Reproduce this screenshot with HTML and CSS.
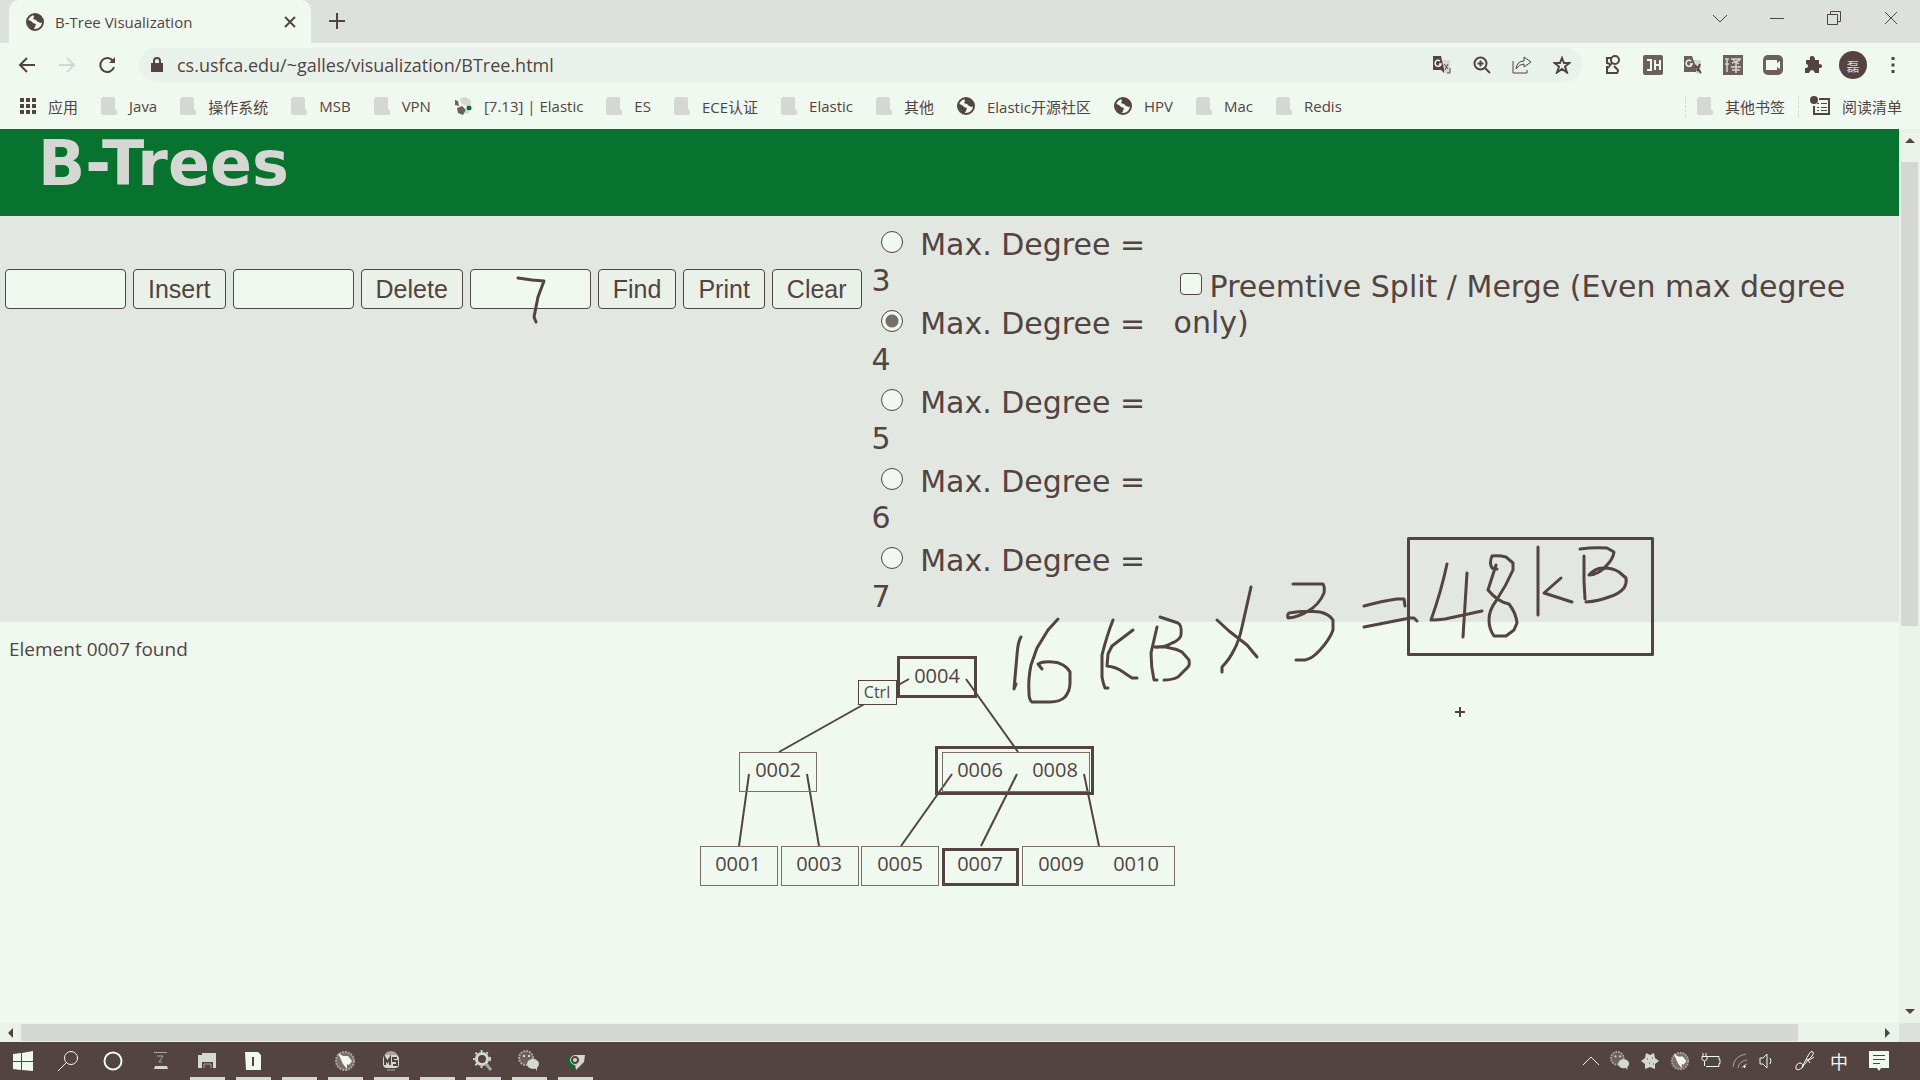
FILE: index.html
```html
<!DOCTYPE html>
<html lang="zh-CN">
<head>
<meta charset="utf-8">
<title>B-Tree Visualization</title>
<link rel="stylesheet" href="styles.css">
</head>
<body>
<svg class="defs" width="0" height="0" aria-hidden="true">
  <symbol id="globe" viewBox="0 0 18 18">
    <circle cx="9" cy="9" r="8" fill="#eff9f0" stroke="#534341" stroke-width="2"/>
    <path d="M2 7l3 1 2 2 3 1-1 3-2 3-3-2-2-4zM7 1l1 3-1 2 3 1 2 2 3 1 2-2-2-4-3-3z" fill="#534341"/>
  </symbol>
  <symbol id="folder" viewBox="0 0 16 18">
    <path d="M2 0h11l1 2v10l2 2v3l-1 1H2l-2-1V2z" fill="#d4d7d2"/>
  </symbol>
  <symbol id="bird" viewBox="0 0 22 22">
    <circle cx="11" cy="11" r="9" fill="#7c6f6b" stroke="#a9a59f" stroke-width="2" stroke-dasharray="2 1"/>
    <path d="M4 3l5 3 5 0 4 5-3 4-2-1 0 5-4-5z" fill="#eff9f0"/>
  </symbol>
  <symbol id="chat" viewBox="0 0 22 22">
    <circle cx="8" cy="8" r="7" fill="#6d605b" stroke="#a9a59f" stroke-width="2" stroke-dasharray="2 1"/>
    <path d="M5 6h2M10 6h2" stroke="#d4d7d2" stroke-width="2"/>
    <ellipse cx="15" cy="14" rx="6" ry="5" fill="#d4d7d2"/>
    <path d="M17 18l2 3v-4z" fill="#d4d7d2"/>
  </symbol>
</svg>

<header class="browser">
  <div class="tabstrip">
    <div class="tab">
      <svg class="globe" aria-hidden="true"><use href="#globe"/></svg>
      <span class="tab-title">B-Tree Visualization</span>
      <button class="icon-btn" aria-label="Close tab"><svg width="12" height="12" viewBox="0 0 12 12"><path d="M1 1l10 10M11 1L1 11" class="line2"/></svg></button>
    </div>
    <button class="icon-btn new-tab" aria-label="New tab"><svg width="16" height="16" viewBox="0 0 16 16"><path d="M8 0v16M0 8h16" class="line2"/></svg></button>
    <div class="window-buttons">
      <button class="icon-btn" aria-label="Search tabs"><svg width="14" height="14" viewBox="0 0 14 14"><path d="M0 4l7 7 7-7" class="line1"/></svg></button>
      <button class="icon-btn" aria-label="Minimize"><svg width="14" height="14" viewBox="0 0 14 14"><path d="M0 7.500h14" class="line1"/></svg></button>
      <button class="icon-btn" aria-label="Restore"><svg width="14" height="14" viewBox="0 0 14 14"><path d="M.5 3.500h10v10H.5zM3.500 3V.5h10v10H11" class="line1"/></svg></button>
      <button class="icon-btn" aria-label="Close"><svg width="14" height="14" viewBox="0 0 14 14"><path d="M1 1l12 12M13 1L1 13" class="line1"/></svg></button>
    </div>
  </div>

  <div class="toolbar">
    <button class="icon-btn nav" aria-label="Back"><svg width="18" height="18" viewBox="0 0 18 18"><path d="M17 9H2M9 2L2 9l7 7" class="line2"/></svg></button>
    <button class="icon-btn nav" aria-label="Forward"><svg width="18" height="18" viewBox="0 0 18 18"><path d="M1 9h15M9 2l7 7-7 7" class="line2 pale"/></svg></button>
    <button class="icon-btn nav" aria-label="Reload"><svg width="18" height="18" viewBox="0 0 18 18"><path d="M15 5a7 7 0 1 0 1 6" class="line2"/><path d="M17 1v6h-6z" fill="#534341"/></svg></button>
    <div class="omnibox">
      <svg width="12" height="16" viewBox="0 0 12 16" aria-hidden="true"><path d="M0 6h12v9H0z" fill="#534341"/><path d="M3 7V4a3 3 0 0 1 6 0v3" class="line2"/></svg>
      <input class="url" aria-label="Address" value="cs.usfca.edu/~galles/visualization/BTree.html">
      <button class="icon-btn tool" aria-label="Translate"><svg width="20" height="20" viewBox="0 0 20 20"><path d="M10 5h8v13h-6z" fill="#d4d7d2"/><path d="M1 1h8l3 13 0 4-3-3H1z" fill="#534341"/><path d="M8 6a3 3 0 1 0 1 3H7" fill="none" stroke="#eff9f0" stroke-width="1.500"/><path d="M12 9l4 5M16 9l-3 6M18 13v5h-3" class="line1"/></svg></button>
      <button class="icon-btn tool" aria-label="Zoom"><svg width="18" height="18" viewBox="0 0 18 18"><circle cx="7.500" cy="7.500" r="6" class="line2"/><path d="M12 12l5 5M7.500 4.500v6M4.500 7.500h6" class="line2"/></svg></button>
      <button class="icon-btn tool" aria-label="Share"><svg width="20" height="20" viewBox="0 0 20 20"><path d="M1 6v12h14v-3M4 14q1-8 8-8V2l7 5-7 5V9q-5 0-8 5z" class="line1"/></svg></button>
      <button class="icon-btn tool" aria-label="Bookmark"><svg width="18" height="18" viewBox="0 0 18 18"><path d="M9 2l2 5h5.500l-4.500 3.500 2 6L9 13l-5 3.500 2-6L1.500 7H7z" class="line2"/></svg></button>
    </div>
    <div class="extensions">
      <button class="icon-btn tool" aria-label="Extension"><svg width="18" height="20" viewBox="0 0 18 20"><circle cx="11" cy="5" r="4" class="line2"/><path d="M7 3H3v5l3 1M8 8l-4 5M3 11v7h10q2-2 0-4l-3-3" class="line2"/></svg></button>
      <button class="icon-btn tool" aria-label="JSON"><svg width="20" height="20" viewBox="0 0 20 20"><rect width="20" height="20" rx="2" fill="#6d605b"/><path d="M4 5h4v10H4M12 5v10M17 5v10M12 10h5" fill="none" stroke="#eff9f0" stroke-width="2"/></svg></button>
      <button class="icon-btn tool" aria-label="Translate extension"><svg width="20" height="20" viewBox="0 0 20 20"><path d="M10 5h8v14h-5z" fill="#d4d7d2"/><path d="M1 1h8l4 11 0 5H1z" fill="#6d605b"/><path d="M8 6a3 3 0 1 0 1 3H7" fill="none" stroke="#eff9f0" stroke-width="1.500"/><path d="M12 10l6 8M17 9l-3 7" class="line2"/></svg></button>
      <button class="icon-btn tool" aria-label="Scan"><svg width="20" height="20" viewBox="0 0 20 20"><rect width="20" height="20" fill="#6d605b"/><path d="M2 4h4M4 4v13M2 9h4M8 4h10M9 8l8-3M10 5l6 4M8 12h10M13 8v10M9 15h8" fill="none" stroke="#d4d7d2" stroke-width="1.500"/></svg></button>
      <button class="icon-btn tool" aria-label="Recorder"><svg width="20" height="20" viewBox="0 0 20 20"><rect width="20" height="20" rx="5" fill="#6d605b"/><path d="M3 5h11v3l3-2v8l-3-2v3H3z" fill="#eff9f0"/></svg></button>
      <button class="icon-btn tool" aria-label="Extensions"><svg width="20" height="20" viewBox="0 0 20 20"><path d="M3 5h4q-1-4 2-4t3 4h4v4q3 0 3 2t-3 2v5h-4q-1-3-3-3t-3 3H2v-5q3 0 3-2T3 9z" fill="#534341"/></svg></button>
      <button class="icon-btn tool avatar" aria-label="Profile">磊</button>
      <button class="icon-btn tool" aria-label="Menu"><svg width="4" height="16" viewBox="0 0 4 16"><path d="M.5 0h3v3h-3zM.5 6.500h3v3h-3zM.5 13h3v3h-3z" fill="#534341"/></svg></button>
    </div>
  </div>

  <nav class="bookmarks">
    <a href="#" class="bookmark"><svg width="16" height="16" viewBox="0 0 16 16"><path d="M0 2h16M0 8h16M0 14h16" fill="none" stroke="#534341" stroke-width="4" stroke-dasharray="4 2"/></svg>应用</a>
    <a href="#" class="bookmark"><svg class="folder"><use href="#folder"/></svg>Java</a>
    <a href="#" class="bookmark"><svg class="folder"><use href="#folder"/></svg>操作系统</a>
    <a href="#" class="bookmark"><svg class="folder"><use href="#folder"/></svg>MSB</a>
    <a href="#" class="bookmark"><svg class="folder"><use href="#folder"/></svg>VPN</a>
    <a href="#" class="bookmark"><svg width="18" height="18" viewBox="0 0 18 18"><path d="M6 1l6-1 5 4v4l-5 1-5-3z" fill="#d4d7d2"/><path d="M1 3l3 1 1 5-4-1zM3 11l5-2 4 4-3 5-5-2z" fill="#6d605b"/><circle cx="15" cy="11" r="2.500" fill="#08722f"/><circle cx="13" cy="15" r="2" fill="#d4d7d2"/></svg>[7.13] | Elastic</a>
    <a href="#" class="bookmark"><svg class="folder"><use href="#folder"/></svg>ES</a>
    <a href="#" class="bookmark"><svg class="folder"><use href="#folder"/></svg>ECE认证</a>
    <a href="#" class="bookmark"><svg class="folder"><use href="#folder"/></svg>Elastic</a>
    <a href="#" class="bookmark"><svg class="folder"><use href="#folder"/></svg>其他</a>
    <a href="#" class="bookmark"><svg class="globe"><use href="#globe"/></svg>Elastic开源社区</a>
    <a href="#" class="bookmark"><svg class="globe"><use href="#globe"/></svg>HPV</a>
    <a href="#" class="bookmark"><svg class="folder"><use href="#folder"/></svg>Mac</a>
    <a href="#" class="bookmark"><svg class="folder"><use href="#folder"/></svg>Redis</a>
    <div class="bookmarks-end">
      <a href="#" class="bookmark"><svg class="folder"><use href="#folder"/></svg>其他书签</a>
      <a href="#" class="bookmark"><svg width="20" height="20" viewBox="0 0 20 20"><circle cx="4" cy="4" r="4" fill="#534341"/><path d="M9 3h10v15H4v-8" class="line2"/><path d="M7 7.500h2M11 7.500h6M7 11.500h2M11 11.500h6M7 14.500h2M11 14.500h6" class="line1"/></svg>阅读清单</a>
    </div>
  </nav>
</header>

<div class="viewport">
  <main class="page">
    <div class="banner"><h1>B-Trees</h1></div>
    <form class="controls">
      <div class="actions">
        <input class="field" aria-label="Value to insert">
        <button type="button" class="action">Insert</button>
        <input class="field" aria-label="Value to delete">
        <button type="button" class="action">Delete</button>
        <input class="field" aria-label="Value to find">
        <button type="button" class="action">Find</button>
        <button type="button" class="action">Print</button>
        <button type="button" class="action">Clear</button>
      </div>
      <div class="degrees">
        <label><input type="radio" name="degree"> Max. Degree = 3</label>
        <label><input type="radio" name="degree" checked> Max. Degree = 4</label>
        <label><input type="radio" name="degree"> Max. Degree = 5</label>
        <label><input type="radio" name="degree"> Max. Degree = 6</label>
        <label><input type="radio" name="degree"> Max. Degree = 7</label>
      </div>
      <label class="preempt"><input type="checkbox">Preemtive Split / Merge (Even max degree only)</label>
    </form>
    <div class="canvas">
      <svg class="tree" width="1200" height="280" viewBox="0 622 1200 280">
        <text x="9" y="656" class="message">Element 0007 found</text>
        <g class="edges">
          <path d="M909 679L779 752M966 679l52 73M749 774l-10 72M807 774l12 72M952 774l-51 72M1017 774l-36 72M1084 774l15 72"/>
        </g>
        <g class="nodes">
          <rect x="739.500" y="752.500" width="77" height="39"/>
          <rect x="942.500" y="752.500" width="147" height="39"/>
          <rect x="700.500" y="846.500" width="77" height="39"/>
          <rect x="781.500" y="846.500" width="77" height="39"/>
          <rect x="861.500" y="846.500" width="77" height="39"/>
          <rect x="1022.500" y="846.500" width="152" height="39"/>
        </g>
        <g class="marked">
          <rect x="898.500" y="657.500" width="77" height="39"/>
          <rect x="936.500" y="747.500" width="156" height="46"/>
          <rect x="943.500" y="849.500" width="74" height="35"/>
        </g>
        <g class="keys">
          <text x="937" y="683">0004</text>
          <text x="778" y="777">0002</text>
          <text x="980" y="777">0006</text>
          <text x="1055" y="777">0008</text>
          <text x="738" y="871">0001</text>
          <text x="819" y="871">0003</text>
          <text x="900" y="871">0005</text>
          <text x="980" y="871">0007</text>
          <text x="1061" y="871">0009</text>
          <text x="1136" y="871">0010</text>
        </g>
        <rect x="858.500" y="680.500" width="38" height="24" class="hint"/>
        <text x="877" y="698" class="hint-text">Ctrl</text>
      </svg>
    </div>
  </main>
  <div class="vscroll">
    <svg width="10" height="5" viewBox="0 0 10 5"><path d="M5 0l5 5H0z"/></svg>
    <div class="vthumb"></div>
    <svg width="10" height="5" viewBox="0 0 10 5"><path d="M0 0h10L5 5z"/></svg>
  </div>
  <div class="hscroll">
    <svg width="5" height="10" viewBox="0 0 5 10"><path d="M5 0v10L0 5z"/></svg>
    <div class="hthumb"></div>
    <svg width="5" height="10" viewBox="0 0 5 10"><path d="M0 0l5 5-5 5z"/></svg>
  </div>
  <div class="corner"></div>
</div>

<footer class="taskbar">
  <div class="system">
    <button class="task" aria-label="Start"><svg width="20" height="20" viewBox="0 0 20 20"><path d="M0 3l8-1v8H0zM9 2l11-2v10H9zM0 11h8v8l-8-1zM9 11h11v9L9 19z" fill="#eff9f0"/></svg></button>
    <button class="task" aria-label="Search"><svg width="20" height="20" viewBox="0 0 20 20"><circle cx="13" cy="7" r="6.500" class="light"/><path d="M8.500 11.500L0 20" class="light"/></svg></button>
    <button class="task" aria-label="Cortana"><svg width="20" height="20" viewBox="0 0 20 20"><circle cx="10" cy="10" r="8.500" class="light ring"/></svg></button>
  </div>
  <div class="apps">
    <button class="task" aria-label="Terminal"><svg width="16" height="20" viewBox="0 0 16 20"><path d="M1 1.500h13M4 5h6l-4 6h3" class="light faint"/><path d="M2 15h12l1 3H1z" fill="#d4d7d2"/></svg></button>
    <button class="task open" aria-label="Explorer"><svg width="18" height="16" viewBox="0 0 18 16"><path d="M0 2h4V0h14v15h-3V9H4v6H0z" fill="#d4d7d2"/><path d="M6 15v-4h7v4" class="light faint"/></svg></button>
    <button class="task open" aria-label="Typora"><svg width="18" height="20" viewBox="0 0 18 20"><path d="M1 1h13l3 3v15H2z" fill="#eff9f0"/><path d="M9 6v9" class="line2"/></svg></button>
    <button class="task open" aria-label="App"></button>
    <button class="task open" aria-label="Bird"><svg width="22" height="22"><use href="#bird"/></svg></button>
    <button class="task open" aria-label="Monitor"><svg width="20" height="22" viewBox="0 0 20 22"><ellipse cx="10" cy="7" rx="7" ry="6" fill="#a9a59f"/><rect x="2" y="5" width="16" height="13" rx="4" fill="#d4d7d2"/><path d="M4 15V8l2.500 4L9 8v7M16 8h-4v3h4v4h-4" class="line2"/><path d="M6 20h8" class="light faint"/></svg></button>
    <button class="task open" aria-label="App"></button>
    <button class="task open" aria-label="Inspect"><svg width="20" height="22" viewBox="0 0 20 22"><circle cx="9" cy="9" r="5.500" fill="none" stroke="#d4d7d2" stroke-width="3"/><circle cx="9" cy="9" r="8" fill="none" stroke="#d4d7d2" stroke-width="2" stroke-dasharray="2 4"/><path d="M13 14l5 6" stroke="#a9a59f" stroke-width="3"/></svg></button>
    <button class="task open" aria-label="Chat"><svg width="22" height="22"><use href="#chat"/></svg></button>
    <button class="task open" aria-label="Chrome"><svg width="20" height="20" viewBox="0 0 20 20"><path d="M1 4l3 11 6 4-1-7z" fill="#08722f"/><path d="M10 4h10l-1 7-8 8-1-6z" fill="#d4d7d2"/><circle cx="10" cy="9" r="4.500" fill="#534341" stroke="#d4d7d2"/><circle cx="10" cy="9" r="2" fill="#d4d7d2"/></svg></button>
  </div>
  <div class="tray">
    <svg width="16" height="10" viewBox="0 0 16 10"><path d="M0 9l8-8 8 8" class="light"/></svg>
    <svg width="20" height="20"><use href="#chat"/></svg>
    <svg width="18" height="18" viewBox="0 0 18 18"><path d="M5 1l4 2 4-2 1 5 4 3-4 3 0 5-5-2-5 2V12L0 9l4-3z" fill="#d4d7d2"/><path d="M6 7h1M11 6h1M8 11h1M12 12h1" class="line1"/></svg>
    <svg width="20" height="20"><use href="#bird"/></svg>
    <svg width="20" height="16" viewBox="0 0 20 16"><path d="M6 3.500h12v3h1v4h-1v3H5M2 0v3M5 0v3M1 3.500h5v3L3.500 8 1 6.500zM3.500 8v5" class="light"/></svg>
    <svg width="16" height="16" viewBox="0 0 16 16"><path d="M1 14Q2 3 14 1M6 15q1-7 9-8M10 15q1-3 5-4" class="light faint"/><path d="M11 13.500h3M12.500 12v3" class="light"/></svg>
    <svg width="16" height="16" viewBox="0 0 16 16"><path d="M1 5h3l4-4v14l-4-4H1zM11 5q2 3 0 6" class="light"/></svg>
    <svg class="pen" width="20" height="20" viewBox="0 0 20 20"><path d="M1 15q2-4 5-3 4 3 1 5-4 3-6 1zM7 16L14 3q2-4 4-2 1 2-1 4L7 16M11 9q5 0 8-3M13 9l2 3" class="light"/></svg>
    <span class="ime">中</span>
    <svg width="20" height="20" viewBox="0 0 20 20"><path d="M0 0h20v17h-8l-2 3-2-3H0z" fill="#eff9f0"/><path d="M4 4.500h12M4 8.500h12M4 12.500h7" class="line1"/></svg>
  </div>
</footer>

<svg class="ink" width="1700" height="760" viewBox="0 0 1700 760" aria-hidden="true">
  <path d="M518 278l14 2 12 1-6 16-4 20 2 5"/>
  <path d="M1021 637q-3 4-4 18l-3 34 2-5"/>
  <path d="M1058 619l-10 11-11 18-6 17q-3 14-2 28 0 7 3 9h18q10 0 15-5 5-6 5-14v-11q-2-4-7-7-5-3-10-3-10-1-15 2l4 5"/>
  <path d="M1113 620q-6 15-11 35v22q1 6 3 11h3"/>
  <path d="M1133 630l-21 16-4 8-1 12q8 1 13 4l12 8h5"/>
  <path d="M1157 627l-6 26q0 14 3 27h3"/>
  <path d="M1160 617l18 6q4 2 3 12-1 5-9 8-9 5-17 4 9-1 15 1 7 1 12 4l7 8q1 5-1 7l-10 10q-6 3-14 3"/>
  <path d="M1251 587l-9 40q-3 14-8 23-5 10-12 17v5M1217 620l12 11 18 14 10 12"/>
  <path d="M1293 584h30q2 3 1 9-5 12-16 18-9 6-20 7-1-4 1-5 16-3 31-1 9 2 13 8v10q-3 9-13 20-8 9-15 10h-9"/>
  <path d="M1364 606q18-5 33-7h7l1 7M1364 627l46-9h4l3 3"/>
  <path d="M1408.500 538.500h244v116h-244z"/>
  <path d="M1447 564q-6 28-16 56 7 0 14-1l37-8M1467 573q-2 34-4 64"/>
  <path d="M1496 565l-8 25q10 12 21 14 7 9 8 19l-3 7-8 6h-12q-5-7-5-16 0-10 7-19 10-15 17-31v-7l-7-6q-7-2-14-1-3 7 0 12l5 1"/>
  <path d="M1538 547v68M1561 578l-17 15 28 9"/>
  <path d="M1584 556v25l1 18M1580 549q14-2 27-1l7 4q-1 7-7 13-7 9-18 10 7-8 15-7 9 0 15 4l7 6q1 5-2 10-5 6-15 9-10 4-23 5"/>
  <path d="M1455 712h10M1460 707v10" class="cursor"/>
</svg>
</body>
</html>
```
FILE: styles.css
```css
:root {
  --paper: #eff9f0;
  --grey: #d4d7d2;
  --mid: #e2e8e1;
  --ink: #534341;
  --green: #08722f;
}

* { box-sizing: border-box; }

body {
  margin: 0;
  height: 100vh;
  display: flex;
  flex-direction: column;
  overflow: hidden;
  position: relative;
  background: var(--paper);
  color: var(--ink);
  font-family: "Open Sans", "Noto Sans CJK SC", sans-serif;
  font-size: 15px;
}

.defs { position: absolute; }

.line1 { fill: none; stroke: var(--ink); stroke-width: 1; }
.line2 { fill: none; stroke: var(--ink); stroke-width: 2; }
.pale { stroke: var(--grey); }
.light { fill: none; stroke: var(--paper); stroke-width: 1; }
.light.ring { stroke-width: 2; }
.light.faint { stroke: #a9a59f; }

.icon-btn {
  display: flex;
  align-items: center;
  justify-content: center;
  padding: 0;
  border: 0;
  background: none;
  color: inherit;
}

.globe { width: 18px; height: 18px; flex: none; }
.folder { width: 16px; height: 18px; flex: none; }

/* Tab strip */
.tabstrip {
  height: 43px;
  display: flex;
  background: #dce1db;
}
.tab {
  width: 302px;
  margin-left: 9px;
  padding: 0 15px 0 17px;
  display: flex;
  align-items: center;
  background: var(--paper);
  border-radius: 10px 10px 0 0;
}
.tab-title { flex: 1; margin-left: 11px; }
.new-tab { width: 52px; height: 42px; }
.window-buttons { margin-left: auto; display: flex; height: 36px; padding-right: 1px; }
.window-buttons .icon-btn { width: 57px; }

/* Toolbar */
.toolbar {
  height: 44px;
  display: flex;
  align-items: center;
  padding-left: 7px;
}
.nav { width: 40px; }
.omnibox {
  flex: 1;
  height: 34px;
  margin-left: 12px;
  padding: 0 0 0 12px;
  display: flex;
  align-items: center;
  border-radius: 17px;
  background: #e9f2ea;
}
.url {
  flex: 1;
  margin-left: 14px;
  padding: 0;
  border: 0;
  background: none;
  color: inherit;
  font: 18px "Open Sans", sans-serif;
}
.tool { width: 40px; height: 32px; }
.extensions { display: flex; margin-left: 11px; padding-right: 7px; }
.avatar {
  width: 28px;
  height: 28px;
  margin: 2px 6px;
  border-radius: 50%;
  background: var(--ink);
  color: var(--grey);
  font: 13px "Noto Sans CJK SC", sans-serif;
}

/* Bookmarks */
.bookmarks {
  height: 42px;
  display: flex;
  align-items: center;
  gap: 23px;
  padding: 0 18px 4px 20px;
}
.bookmark {
  display: flex;
  align-items: center;
  gap: 12px;
  color: inherit;
  text-decoration: none;
  white-space: nowrap;
}
.bookmarks-end { margin-left: auto; display: flex; gap: 13px; }
.bookmarks-end .bookmark { border-left: 1px dashed var(--grey); padding-left: 11px; }

/* Web page */
.viewport {
  flex: 1;
  min-height: 0;
  display: grid;
  grid-template-columns: 1fr 21px;
  grid-template-rows: 1fr 19px;
}
.page { min-width: 0; min-height: 0; }
.banner { height: 87px; padding-left: 38px; background: var(--green); }
h1 {
  margin: 0;
  color: var(--grey);
  font: bold 62px/70px "DejaVu Sans", sans-serif;
}
.controls {
  display: flex;
  align-items: flex-start;
  padding-left: 5px;
  background: var(--mid);
  font: 30px/36px "DejaVu Sans", sans-serif;
}
.actions { display: flex; gap: 7px; padding-top: 53px; }
.field,
.action {
  height: 40px;
  border: 1px solid var(--ink);
  border-radius: 4px;
  color: inherit;
  font: 25px "Liberation Sans", sans-serif;
}
.field { width: 121px; background: var(--paper); }
.action { padding: 0 14px; background: #e9f1e9; }
.degrees { width: 290px; margin-left: 10px; padding-top: 11px; }
.degrees label { display: block; margin-bottom: 7px; }
.degrees input,
.preempt input {
  appearance: none;
  width: 22px;
  height: 22px;
  margin: 0 8px 2px 9px;
  border: 1px solid var(--ink);
  border-radius: 50%;
  background: var(--paper);
}
.degrees input:checked {
  background: radial-gradient(circle, #75706a 0 6px, var(--paper) 7px);
}
.preempt { flex: 1; margin-left: 12px; padding-top: 53px; }
.preempt input { margin: 0 8px 2px 6px; border-radius: 4px; }

/* Tree drawing */
.tree { display: block; font-family: "Open Sans", sans-serif; font-size: 20px; fill: var(--ink); }
.message { font-size: 19px; }
.edges { fill: none; stroke: var(--ink); stroke-width: 2; }
.nodes { fill: none; stroke: #7a6d6a; stroke-width: 1; }
.marked { fill: none; stroke: var(--ink); stroke-width: 3; }
.keys { text-anchor: middle; }
.hint { fill: var(--paper); stroke: var(--ink); }
.hint-text { font-size: 16px; text-anchor: middle; }

/* Scroll bars */
.vscroll,
.hscroll {
  display: flex;
  align-items: center;
  justify-content: space-between;
  background: #eaf3ea;
  fill: var(--ink);
}
.vscroll { flex-direction: column; padding: 9px 0; }
.hscroll { padding: 0 9px 0 8px; }
.vthumb { width: 17px; height: 53%; margin: 19px 0 auto; background: var(--grey); }
.hthumb { flex: 1; height: 17px; margin: 0 87px 0 8px; background: var(--grey); }
.corner { background: #dce1db; }

/* Taskbar */
.taskbar {
  height: 38px;
  flex: none;
  display: flex;
  background: var(--ink);
  color: var(--paper);
}
.system,
.apps,
.tray { display: flex; }
.system .task { width: 45px; }
.apps { margin-left: 3px; }
.apps .task { width: 46px; }
.task {
  display: flex;
  align-items: center;
  justify-content: center;
  padding: 0;
  border: 0;
  background: none;
}
.task.open {
  background: linear-gradient(var(--grey), var(--grey)) center bottom / 35px 3px no-repeat;
}
.tray { align-items: center; gap: 11px; margin-left: auto; padding-right: 31px; }
.pen { margin-left: 9px; }
.ime { margin: 0 10px 0 4px; font: 18px/20px "Noto Sans CJK SC", sans-serif; }

/* Pen strokes over the page */
.ink {
  position: absolute;
  top: 0;
  left: 0;
  pointer-events: none;
  fill: none;
  stroke: var(--ink);
  stroke-width: 3;
  stroke-linecap: round;
  stroke-linejoin: round;
}
.cursor { stroke-width: 2; stroke-linecap: butt; }
```
